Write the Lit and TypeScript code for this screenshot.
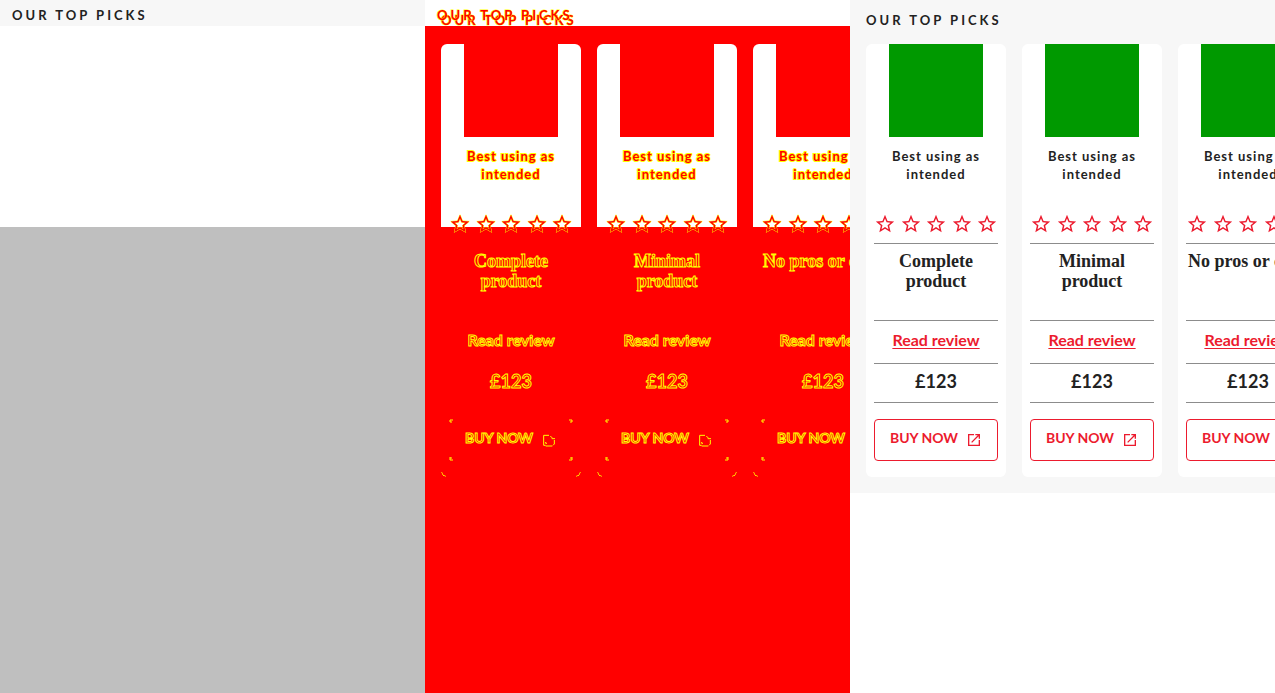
import { LitElement, html, css, svg, nothing } from "lit";
import { customElement, property } from "lit/decorators.js";

const starPath =
  "M22 9.24l-7.19-.62L12 2 9.19 8.63 2 9.24l5.46 4.73L5.82 21 12 17.27 18.18 21l-1.63-7.03L22 9.24zM12 15.4l-3.76 2.27 1-4.28-3.32-2.88 4.38-.38L12 6.1l1.71 4.04 4.38.38-3.32 2.88 1 4.28L12 15.4z";
const openPath =
  "M19 19H5V5h7V3H3v18h18v-9h-2v7zM14 3v2h3.59l-9.83 9.83 1.41 1.41L19 6.41V10h2V3h-7z";
const openOutline = svg`<path d="M4 5H12M14 6L17 9M16 10H21M20 12V18L18 20M17 21H7M4 5V20H7M7 15V17H9" />`;

interface Product {
  title: string[];
}

const products: Product[] = [
  { title: ["Complete", "product"] },
  { title: ["Minimal", "product"] },
  { title: ["No pros or cons"] },
];

@customElement("product-card")
class ProductCard extends LitElement {
  @property({ attribute: false }) product: Product = products[0];
  @property({ type: Boolean, reflect: true }) diff = false;

  static styles = css`
    :host {
      display: block;
      flex: none;
      width: 140px;
      --ink: #222;
      --accent: #ec1b2e;
      --rule: #8c8c8c;
      --image: #009900;
    }
    :host([diff]) {
      --ink: #f00;
      --accent: #f00;
      --rule: #f00;
      --image: #f00;
      -webkit-text-stroke: 1px #ff0;
    }
    .card {
      position: relative;
      box-sizing: border-box;
      padding: 0 8px 16px;
      border-radius: 6px;
      overflow: hidden;
      background: #fff;
      color: var(--ink);
      text-align: center;
      font-family: Lato, sans-serif;
      font-weight: 700;
    }
    :host([diff]) .card {
      background: linear-gradient(#fff 183px, #f00 183px);
    }
    .image {
      height: 93px;
      margin: 0 15px;
      background: var(--image);
    }
    .label {
      margin: 0;
      padding-top: 10px;
      height: 66px;
      box-sizing: border-box;
      font-size: 13px;
      line-height: 18px;
      letter-spacing: 1px;
    }
    :host([diff]) .label {
      -webkit-text-stroke: 2px #ff0;
      paint-order: stroke fill;
    }
    .stars {
      display: flex;
      justify-content: space-between;
      padding: 10px 0 8px;
      border-bottom: 1px solid var(--rule);
    }
    .stars svg {
      display: block;
      width: 22px;
      height: 22px;
      fill: var(--accent);
    }
    :host([diff]) .stars svg {
      stroke: #ff0;
      stroke-width: 1;
    }
    .title {
      margin: 0;
      padding: 7px 0 0;
      height: 76px;
      box-sizing: border-box;
      font: 700 18px/20px "Liberation Serif", serif;
    }
    .line {
      display: block;
      white-space: nowrap;
    }
    .row {
      border-top: 1px solid var(--rule);
      font-size: 16px;
      line-height: 20px;
      padding: 9px 0 13px;
    }
    a {
      color: var(--accent);
      text-underline-offset: 2px;
    }
    :host([diff]) a {
      text-decoration: none;
    }
    .price {
      padding: 7px 0 11px;
      border-bottom: 1px solid var(--rule);
      font-size: 18px;
    }
    .buy {
      position: relative;
      display: flex;
      align-items: center;
      justify-content: center;
      gap: 8px;
      width: 100%;
      height: 42px;
      margin-top: 16px;
      padding: 0 0 4px;
      border: 1px solid var(--accent);
      border-radius: 4px;
      background: none;
      color: var(--accent);
      font: 700 14px/20px Lato, sans-serif;
    }
    :host([diff]) .buy {
      border-color: transparent;
    }
    .buy svg {
      width: 16px;
      height: 16px;
      fill: currentColor;
      margin-top: 4px;
    }
    :host([diff]) .buy .icon {
      fill: none;
      stroke: #ff0;
      stroke-width: 1.5;
    }
    .buy .dots,
    .arcs {
      position: absolute;
      margin: 0;
      fill: none;
      stroke: #ff0;
    }
    .buy .dots {
      inset: -1px;
      width: 124px;
      height: 42px;
      margin: 0;
    }
    .arcs {
      left: 0;
      bottom: 0;
      width: 140px;
      height: 8px;
    }
  `;

  render() {
    return html`<article class="card">
      <div class="image"></div>
      <p class="label">Best using as intended</p>
      <div class="stars" role="img" aria-label="Rating">
        ${[1, 2, 3, 4, 5].map(
          () => html`<svg viewBox="0 0 24 24" paint-order="stroke"><path d=${starPath} /></svg>`
        )}
      </div>
      <h3 class="title">
        ${this.product.title.map((t) => html`<span class="line">${t}</span>`)}
      </h3>
      <div class="row"><a href="#review">Read review</a></div>
      <div class="row price">£123</div>
      <button class="buy" type="button">
        BUY NOW
        <svg class="icon" viewBox="0 0 24 24">
          ${this.diff ? openOutline : svg`<path d=${openPath} />`}
        </svg>
        ${this.diff
          ? html`<svg class="dots" viewBox="0 0 124 42">
              <path d="M1 3V1H4M2 4V2M120 1H123V3M122 4V2M1 38V41H4M2 38V40M120 41H123V38M122 38V40" />
            </svg>`
          : nothing}
      </button>
      ${this.diff
        ? html`<svg class="arcs" viewBox="0 0 140 8">
            <path d="M0.5 3Q1 7 5 7.5M135 7.5Q139 7 139.5 3" />
          </svg>`
        : nothing}
    </article>`;
  }
}

@customElement("app-root")
class AppRoot extends LitElement {
  static styles = css`
    :host {
      display: grid;
      grid-template-columns: repeat(3, minmax(0, 1fr));
      min-height: 100vh;
      background: #fff;
      color: #222;
    }
    .panel {
      overflow: hidden;
    }
    .before {
      display: flex;
      flex-direction: column;
      background: #bfbfbf;
    }
    .heading {
      margin: 0;
      font: 700 13px/20px Lato, sans-serif;
      letter-spacing: 3px;
      white-space: nowrap;
    }
    .bar {
      padding: 5px 12px 1px;
      background: #f7f7f7;
    }
    .blank {
      height: 201px;
      background: #fff;
    }
    .picks {
      padding: 10px 16px 16px;
    }
    .after .picks {
      background: #f7f7f7;
    }
    .difference {
      position: relative;
      background: linear-gradient(#fff 26px, #f00 26px);
    }
    .difference .heading {
      color: #f00;
      -webkit-text-stroke: 1px #ff0;
      paint-order: stroke fill;
    }
    .difference .ghost {
      position: absolute;
      left: 12px;
      top: 5px;
    }
    .cards {
      display: flex;
      gap: 16px;
      margin-top: 14px;
    }
  `;

  private cards(diff: boolean) {
    return html`<div class="cards">
      ${products.map((p) => html`<product-card .product=${p} ?diff=${diff}></product-card>`)}
    </div>`;
  }

  render() {
    return html`
      <section class="panel before">
        <div class="bar"><h2 class="heading">OUR TOP PICKS</h2></div>
        <div class="blank"></div>
      </section>
      <section class="panel difference">
        <h2 class="heading ghost">OUR TOP PICKS</h2>
        <div class="picks">
          <h2 class="heading">OUR TOP PICKS</h2>
          ${this.cards(true)}
        </div>
      </section>
      <section class="panel after">
        <div class="picks">
          <h2 class="heading">OUR TOP PICKS</h2>
          ${this.cards(false)}
        </div>
      </section>
    `;
  }
}
